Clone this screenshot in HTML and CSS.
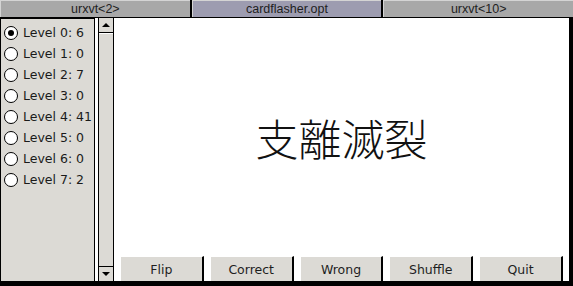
FILE: index.html
```html
<!DOCTYPE html>
<html>
<head>
  <link rel="stylesheet" href="styles.css">
</head>
<body>
  <div class="tabs">
    <div class="tab">urxvt&lt;2&gt;</div>
    <div class="tab active">cardflasher.opt</div>
    <div class="tab">urxvt&lt;10&gt;</div>
  </div>
  <div class="window">
    <div class="levels">
      <label class="level"><span class="radio checked"></span>Level 0: 6</label>
      <label class="level"><span class="radio"></span>Level 1: 0</label>
      <label class="level"><span class="radio"></span>Level 2: 7</label>
      <label class="level"><span class="radio"></span>Level 3: 0</label>
      <label class="level"><span class="radio"></span>Level 4: 41</label>
      <label class="level"><span class="radio"></span>Level 5: 0</label>
      <label class="level"><span class="radio"></span>Level 6: 0</label>
      <label class="level"><span class="radio"></span>Level 7: 2</label>
    </div>
    <div class="scrollbar">
      <div class="arrow up"></div>
      <div class="track"></div>
      <div class="arrow down"></div>
    </div>
    <div class="main">
      <div class="card">支離滅裂</div>
      <div class="buttons">
        <button>Flip</button>
        <button>Correct</button>
        <button>Wrong</button>
        <button>Shuffle</button>
        <button>Quit</button>
      </div>
    </div>
  </div>
</body>
</html>
```

FILE: styles.css
```css
body {
  margin: 0;
  width: 573px;
  height: 286px;
  background: #000000;
  overflow: hidden;
  font-family: 'DejaVu Sans', sans-serif;
}

.tabs {
  display: flex;
  gap: 2px;
  height: 17px;
  padding-bottom: 1px;
}

.tab {
  flex: 1;
  background: #a8a8a8;
  border-top: 1px solid #d4d4d4;
  border-left: 1px solid #d4d4d4;
  color: #1e1e1e;
  font-family: 'Liberation Sans', sans-serif;
  font-size: 12.5px;
  line-height: 16px;
  text-align: center;
}

.tab.active {
  background: #9d9cb0;
}

.window {
  display: flex;
  height: 263px;
  background: #ffffff;
  border-right: 4px solid #000000;
  border-bottom: 5px solid #000000;
}

.levels {
  width: 95px;
  background: #dcdad5;
  border: 1px solid #000000;
  border-bottom: none;
  padding-top: 3px;
  box-sizing: border-box;
}

.level {
  display: flex;
  align-items: center;
  height: 21px;
  padding-left: 3px;
  font-size: 12.5px;
  color: #1a1a1a;
}

.radio {
  width: 12px;
  height: 12px;
  border: 1px solid #000000;
  border-radius: 50%;
  background: #ffffff;
  margin-right: 5px;
  display: flex;
  align-items: center;
  justify-content: center;
}

.radio.checked::after {
  content: "";
  width: 6px;
  height: 6px;
  border-radius: 50%;
  background: #000000;
}

.scrollbar {
  width: 14px;
  margin-left: 3px;
  display: flex;
  flex-direction: column;
  background: #dcdad5;
  border-left: 1px solid #000000;
  border-right: 1px solid #000000;
}

.arrow {
  height: 14px;
  display: flex;
  align-items: center;
  justify-content: center;
}

.arrow.up {
  border-bottom: 1px solid #000000;
}

.arrow.down {
  border-top: 1px solid #000000;
}

.arrow.up::after {
  content: "";
  border-left: 4px solid transparent;
  border-right: 4px solid transparent;
  border-bottom: 4px solid #000000;
}

.arrow.down::after {
  content: "";
  border-left: 4px solid transparent;
  border-right: 4px solid transparent;
  border-top: 4px solid #000000;
}

.track {
  flex: 1;
  border-top: 1px solid #ffffff;
}

.main {
  flex: 1;
  display: flex;
  flex-direction: column;
  padding: 0 6px 0 6px;
}

.card {
  flex: 1;
  display: flex;
  align-items: center;
  justify-content: center;
  font-family: 'Noto Sans CJK JP', sans-serif;
  font-weight: 300;
  font-size: 43px;
  color: #111111;
}

.buttons {
  display: flex;
  gap: 6px;
}

.buttons button {
  flex: 1;
  height: 25px;
  background: #dcdad5;
  border: none;
  border-top: 1px solid #ffffff;
  border-left: 1px solid #ffffff;
  border-right: 2px solid #000000;
  font-family: 'DejaVu Sans', sans-serif;
  font-size: 12.5px;
  color: #1e1e1e;
  padding: 0;
}

.buttons button:focus {
  outline: 0;
}
```
